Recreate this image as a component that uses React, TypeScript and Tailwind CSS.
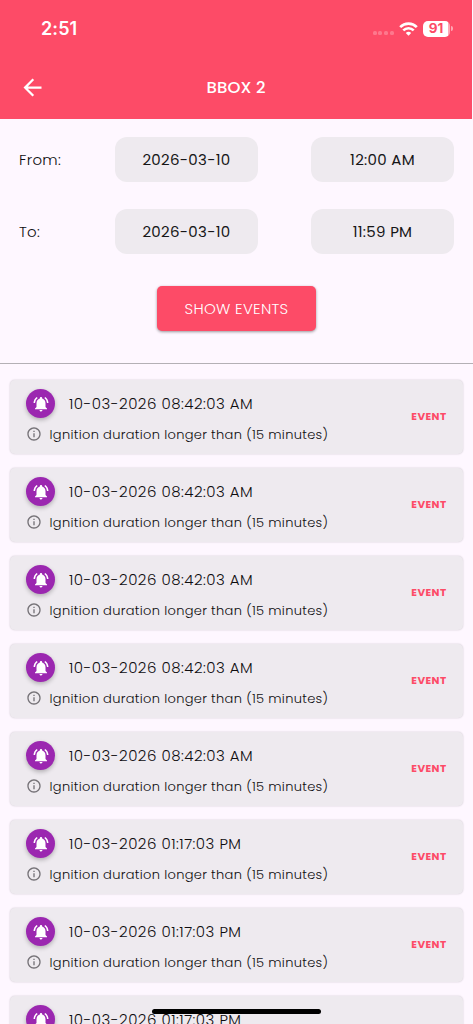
import { MdArrowBack, MdInfoOutline, MdNotificationsActive } from 'react-icons/md';

const filters = [
  { label: 'From:', date: '2026-03-10', time: '12:00 AM' },
  { label: 'To:', date: '2026-03-10', time: '11:59 PM' },
];

const events = [
  { id: 1, time: '10-03-2026 08:42:03 AM' },
  { id: 2, time: '10-03-2026 08:42:03 AM' },
  { id: 3, time: '10-03-2026 08:42:03 AM' },
  { id: 4, time: '10-03-2026 08:42:03 AM' },
  { id: 5, time: '10-03-2026 08:42:03 AM' },
  { id: 6, time: '10-03-2026 01:17:03 PM' },
  { id: 7, time: '10-03-2026 01:17:03 PM' },
  { id: 8, time: '10-03-2026 01:17:03 PM' },
];

function StatusBar() {
  return (
    <div className="flex h-[56px] items-center justify-between pl-[41px] pr-[19px] pt-[1px] font-['Inter',sans-serif]">
      <span className="text-[18px] font-semibold tracking-[0.1px]">2:51</span>
      <div className="flex items-center">
        <div className="mr-[5px] mt-[9px] flex gap-[1.8px]">
          {[0, 1, 2, 3].map((dot) => (
            <span key={dot} className="h-[4px] w-[4px] rounded-[1.5px] bg-white/25" />
          ))}
        </div>
        <svg className="mr-[5px] h-[14px] w-[19px]" viewBox="0 0 19 14" fill="none" stroke="white">
          <path d="M1.2 5.1a11.7 11.7 0 0 1 16.6 0" strokeWidth="2.7" />
          <path d="M4.3 8.4a7.3 7.3 0 0 1 10.4 0" strokeWidth="2.6" />
          <path d="M9.5 13.8 6.8 11.1a3.8 3.8 0 0 1 5.4 0z" fill="white" stroke="none" />
        </svg>
        <div className="flex h-[16px] w-[27px] items-center justify-center rounded-[5px] bg-[linear-gradient(to_right,white_93%,#fea6b5_93%)] pr-[1px] text-[13.5px] font-bold leading-none text-[#fd4b67]">
          91
        </div>
        <span className="ml-[1px] h-[5px] w-[2px] rounded-r-full bg-white/50" />
      </div>
    </div>
  );
}

function EventCard({ time }: { time: string }) {
  return (
    <div className="flex h-[74px] shrink-0 items-center justify-between rounded-[5px] bg-[#eeeaef] pl-[16.5px] pr-[16.5px] shadow-[0_0_2px_rgba(0,0,0,0.2)]">
      <div>
        <div className="flex items-center">
          <div className="flex h-[29px] w-[29px] items-center justify-center rounded-full bg-[#9b27b0] shadow-[0_2px_4px_rgba(0,0,0,0.25)]">
            <MdNotificationsActive className="h-[18px] w-[18px] text-white" />
          </div>
          <span className="ml-[14px] whitespace-nowrap text-[15px] font-light leading-[22px] tracking-[0.48px] text-[#0e0d0f]">
            {time}
          </span>
        </div>
        <div className="mt-[6px] flex items-center">
          <MdInfoOutline className="h-[16px] w-[16px] text-[#757277]" />
          <span className="ml-[7.5px] whitespace-nowrap pt-[1px] text-[13px] font-light leading-[19px] tracking-[0.32px] text-[#0e0d0f]">
            Ignition duration longer than (15 minutes)
          </span>
        </div>
      </div>
      <span className="text-[10.5px] font-bold tracking-[0.4px] text-[#fd4b67]">EVENT</span>
    </div>
  );
}

export default function App() {
  return (
    <div className="relative flex h-[1024px] w-full flex-col overflow-hidden bg-[#fef7ff] font-['Poppins','Inter',sans-serif]">
      <header className="mr-[1px] h-[119px] shrink-0 bg-[#fd4b67] text-white">
        <StatusBar />
        <div className="grid h-[63px] grid-cols-[60px_1fr_60px] items-center">
          <MdArrowBack className="ml-[19px] h-[27px] w-[27px]" />
          <h1 className="pt-[1px] text-center text-[16.5px] font-medium tracking-[0.1px]">BBOX 2</h1>
        </div>
      </header>

      <section className="shrink-0 pl-[19px] pr-[19px] pt-[18.4px]">
        <div className="flex flex-col gap-[27.6px]">
          {filters.map((filter) => (
            <div key={filter.label} className="flex h-[44.4px] items-center text-[15px] text-[#161617]">
              <span className="w-[96px] pt-[1px] font-light tracking-[0.3px] text-[#0e0d0f]">{filter.label}</span>
              <button className="h-full w-[143px] rounded-[12px] bg-[#eeeaef] pt-[1px] tracking-[0.3px]">
                {filter.date}
              </button>
              <button className="ml-auto h-full w-[143px] rounded-[12px] bg-[#eeeaef] pt-[1px] tracking-[0.3px]">
                {filter.time}
              </button>
            </div>
          ))}
        </div>
        <div className="flex justify-center pt-[32.2px]">
          <button className="h-[45px] w-[159px] rounded-[5px] bg-[#fd4b67] pt-[1px] text-[15px] font-light tracking-[0.3px] text-white shadow-[0_1px_3px_rgba(0,0,0,0.4)]">
            SHOW EVENTS
          </button>
        </div>
      </section>

      <div className="mt-[32px] h-px shrink-0 bg-[#b4b0b5]" />

      <main className="flex flex-col gap-[14px] pl-[9.5px] pr-[10px] pt-[16px]">
        {events.map((event) => (
          <EventCard key={event.id} time={event.time} />
        ))}
      </main>

      <div className="absolute left-[152px] top-[1009px] h-[5px] w-[169px] rounded-full bg-black" />
    </div>
  );
}
